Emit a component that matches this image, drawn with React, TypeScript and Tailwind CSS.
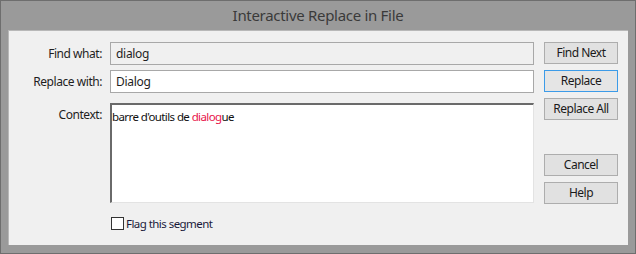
import React from "react";

const font = { fontFamily: '"Noto Sans", "Open Sans", sans-serif' };

function Btn({ children, focused }: { children: React.ReactNode; focused?: boolean }) {
  return (
    <button
      className={
        focused
          ? "h-[22px] w-[74px] border border-[#3c9be8] bg-[#e5e5e5] text-[12px] tracking-[-0.5px] text-[#1a1a1a] leading-none"
          : "h-[22px] w-[74px] border border-[#adadad] bg-[#e1e1e1] text-[12px] tracking-[-0.5px] text-[#1a1a1a] leading-none"
      }
    >
      {children}
    </button>
  );
}

export default function App() {
  return (
    <div
      className="w-[636px] h-[254px] bg-[#9a9a9a] border border-[#6e6e6e] flex flex-col"
      style={font}
    >
      <div className="h-[29px] flex items-center justify-center text-[15px] tracking-[-0.3px] text-[#3a3a3a] pb-[1px]">
        Interactive Replace in File
      </div>
      <div className="mx-[7px] h-[215px] bg-[#f0f0f0] border-l border-t border-[#b8b8b8] flex">
        <div className="flex flex-col pt-[11px]">
          <div className="flex items-center">
            <div className="w-[93px] text-right text-[12px] tracking-[-0.45px] text-[#1e1e1e]">Find what:</div>
            <div className="ml-[8px] w-[424px] h-[23px] border border-[#a8a8a8] bg-[#f0f0f0] flex items-center pl-[5px] text-[12px] tracking-[-0.3px] text-[#1e1e1e]">
              dialog
            </div>
          </div>
          <div className="flex items-center mt-[5px]">
            <div className="w-[93px] text-right text-[12px] tracking-[-0.45px] text-[#1e1e1e]">Replace with:</div>
            <div className="ml-[8px] w-[424px] h-[23px] border border-[#a8a8a8] bg-white flex items-center pl-[5px] text-[12px] tracking-[-0.3px] text-[#1e1e1e]">
              Dialog
            </div>
          </div>
          <div className="flex mt-[10px]">
            <div className="w-[93px] text-right text-[12px] tracking-[-0.45px] text-[#1e1e1e] pt-[3px]">Context:</div>
            <div className="ml-[8px] w-[424px] h-[100px] border-t-2 border-l-2 border-r border-b border-t-[#6a6a6a] border-l-[#6a6a6a] border-r-[#e3e3e3] border-b-[#e3e3e3] bg-white pl-[0px] pt-[3px] text-[11.5px] tracking-[-0.6px] text-[#101010]">
              barre d'outils de <span className="text-[#e8134a]">dialog</span>ue
            </div>
          </div>
          <div className="flex items-center mt-[12px] ml-[102px]">
            <div className="w-[13px] h-[13px] border border-[#333] bg-white" />
            <span className="ml-[2px] text-[11.5px] tracking-[-0.55px] text-[#1a1a3a]">Flag this segment</span>
          </div>
        </div>
        <div className="ml-[10px] pt-[11px] flex flex-col gap-[6px]">
          <Btn>Find Next</Btn>
          <Btn focused>Replace</Btn>
          <Btn>Replace All</Btn>
          <div className="h-[22px]" />
          <Btn>Cancel</Btn>
          <Btn>Help</Btn>
        </div>
      </div>
    </div>
  );
}
